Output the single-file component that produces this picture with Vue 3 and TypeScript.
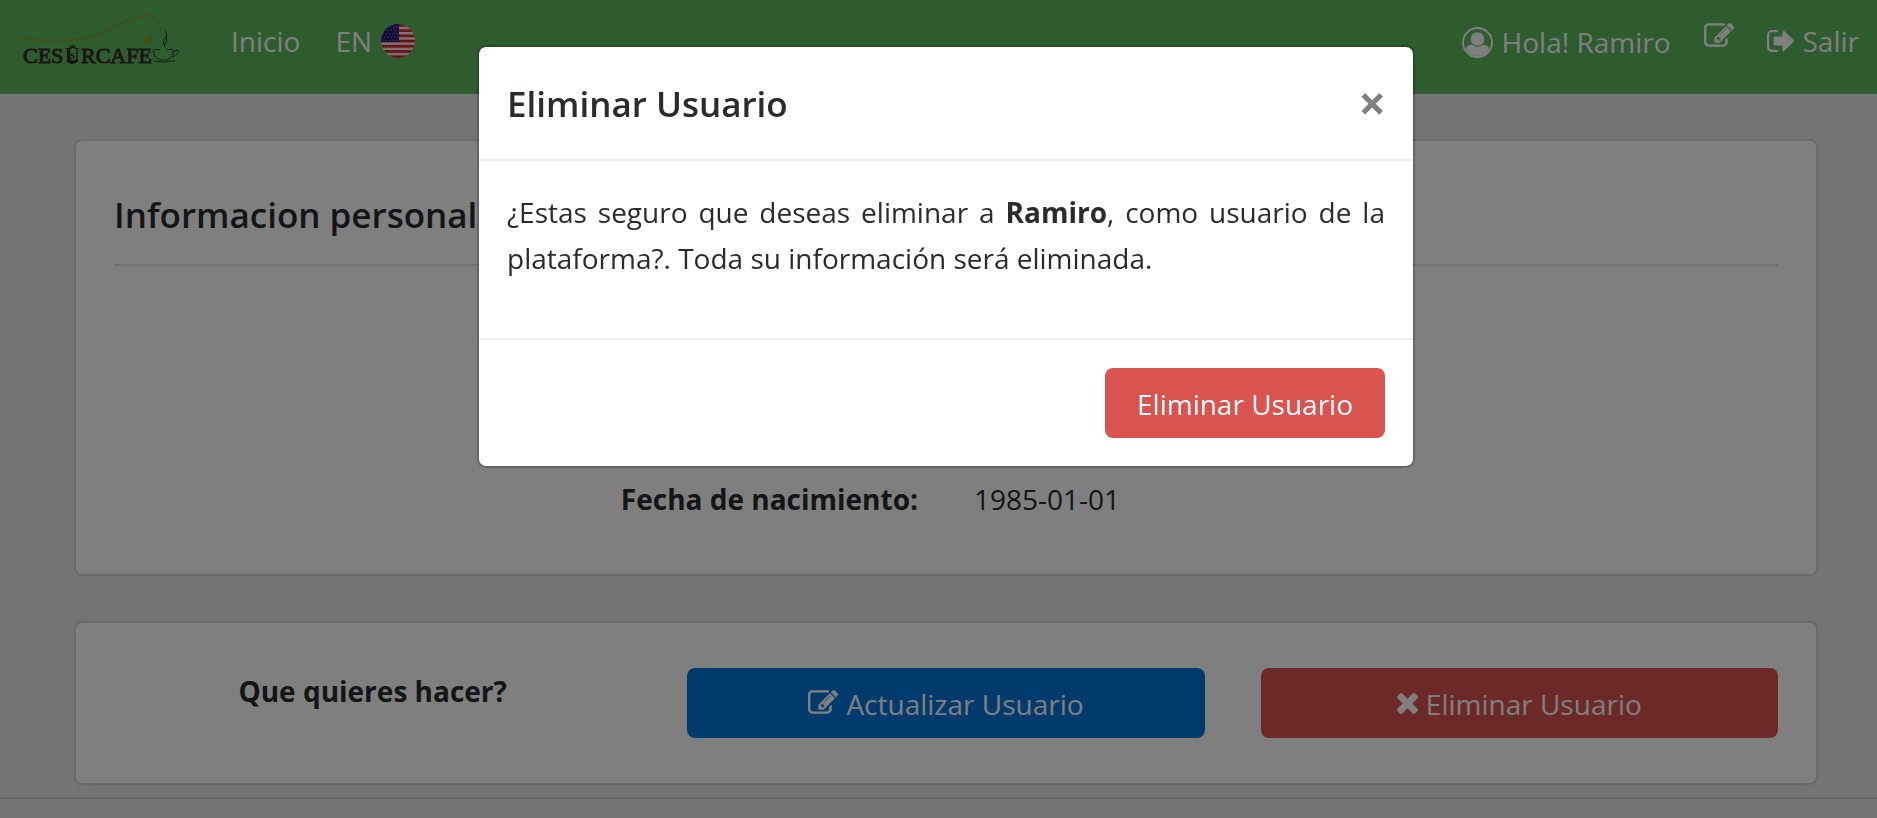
<script setup lang="ts">
import { ref } from 'vue'

const user = { name: 'Ramiro', birthDate: '1985-01-01' }
const dialogOpen = ref(true)

const icons = {
  edit: 'M888 1184l116-116-152-152-116 116v56h96v96h56zm440-720q-16-16-33 1l-350 350q-17 17-1 33t33-1l350-350q17-17 1-33zm80 594v190q0 119-84.5 203.5t-203.5 84.5h-832q-119 0-203.5-84.5t-84.5-203.5v-832q0-119 84.5-203.5t203.5-84.5h832q63 0 117 25 15 7 18 23 3 17-9 29l-49 49q-14 14-32 8-23-6-45-6h-832q-66 0-113 47t-47 113v832q0 66 47 113t113 47h832q66 0 113-47t47-113v-126q0-13 9-22l64-64q15-15 35-7t20 29zm-96-738l288 288-672 672h-288v-288zm444 132l-92 92-288-288 92-92q28-28 68-28t68 28l152 152q28 28 28 68t-28 68z',
  signOut: 'M704 1440q0 4 1 20t.5 26.5-3 23.5-10 19.5-20.5 6.5h-320q-119 0-203.5-84.5t-84.5-203.5v-704q0-119 84.5-203.5t203.5-84.5h320q13 0 22.5 9.5t9.5 22.5q0 4 1 20t.5 26.5-3 23.5-10 19.5-20.5 6.5h-320q-66 0-113 47t-47 113v704q0 66 47 113t113 47h312l11.5 1 11.5 3 8 5.5 7 9 2 13.5zm928-544q0 26-19 45l-544 544q-19 19-45 19t-45-19-19-45v-288h-448q-26 0-45-19t-19-45v-384q0-26 19-45t45-19h448v-288q0-26 19-45t45-19 45 19l544 544q19 19 19 45z',
  times: 'M1490 1322q0 40-28 68l-136 136q-28 28-68 28t-68-28l-294-294-294 294q-28 28-68 28t-68-28l-136-136q-28-28-28-68t28-68l294-294-294-294q-28-28-28-68t28-68l136-136q28-28 68-28t68 28l294 294 294-294q28-28 68-28t68 28l136 136q28 28 28 68t-28 68l-294 294 294 294q28 28 28 68z',
}
</script>

<template>
  <div class="page">
    <header class="navbar">
      <a class="brand" href="#" aria-label="Cesurcafe">
        <svg width="164" height="62" viewBox="18 10 164 62">
          <path d="M20 38.5C45 41 70 42 90 37C110 32 128 17 145 15.3C155 15 161 25 162 36" fill="none" stroke="#8a9a2c" stroke-width="1.5" />
          <path d="M144 45C143 39 147 37 152 35C152 41 151 44 146 43.500z" fill="#8a9a2c" />
          <g class="brand-text">
            <text x="23" y="63">CES</text>
            <text x="81" y="63">RCAFE</text>
          </g>
          <text class="brand-shield" x="65" y="62">U</text>
          <path d="M69 48L70 46L72.500 45L75 46L76 48z" fill="#2c4a20" />
          <path d="M67 60Q72 66 78 60" fill="none" stroke="#2b1f1c" stroke-width="2" />
          <text class="brand-mark" x="70" y="59">S</text>
          <g fill="none" stroke="#2b3a24" stroke-width="1">
            <path d="M153.500 50Q153 58 160 60H167Q174 57 173.500 50M154 49.500H160M167 49.500H173M173 52Q176 49 178.500 51Q179 53 173 57" />
            <path d="M154 61Q164 63.500 175 60.500" />
            <path d="M165 31Q168 35 164.500 39Q162 43 165 47M166.500 36Q168 42 164 46" />
          </g>
        </svg>
      </a>
      <nav class="nav-left">
        <a href="#">Inicio</a>
        <a class="with-icon" href="#">EN
          <svg width="34" height="34" viewBox="0 0 34 34" aria-hidden="true">
            <defs><clipPath id="flag-round"><circle cx="17" cy="17" r="17" /></clipPath></defs>
            <g clip-path="url(#flag-round)">
              <rect width="34" height="34" fill="#f0e4e6" />
              <rect v-for="n in 7" :key="n" y="0" width="34" height="2.700" :transform="`translate(0 ${(n - 1) * 5.230})`" fill="#d3222e" />
              <rect width="18" height="18" fill="#2b1a78" />
              <g fill="#8d83b8">
                <template v-for="r in 5" :key="r">
                  <circle v-for="c in 5" :key="c" :cx="c * 3.500 - (r % 2) * 1.500" :cy="r * 3.400 - 0.500" r="0.600" />
                </template>
              </g>
            </g>
          </svg>
        </a>
      </nav>
      <nav class="nav-right">
        <a class="with-icon greeting" href="#">
          <svg width="31" height="31" viewBox="0 0 31 31" aria-hidden="true">
            <defs><clipPath id="avatar-round"><circle cx="15.500" cy="15.500" r="13.500" /></clipPath></defs>
            <circle cx="15.500" cy="15.500" r="14.500" fill="none" stroke="currentColor" stroke-width="1.800" />
            <g clip-path="url(#avatar-round)">
              <path d="M3 31V24Q4 17.500 10 17.500Q15.500 22 21 17.500Q27 17.500 28 24V31z" fill="currentColor" />
            </g>
            <circle cx="15.500" cy="12" r="6.800" fill="currentColor" />
          </svg>
          Hola! {{ user.name }}
        </a>
        <a class="edit-link" href="#" aria-label="Editar">
          <svg width="30" height="24" viewBox="0 128 1792 1408" fill="currentColor"><path :d="icons.edit" stroke="currentColor" stroke-width="30" /></svg>
        </a>
        <a class="with-icon" href="#">
          <svg width="27" height="22" viewBox="64 256 1568 1280" fill="currentColor" aria-hidden="true"><path :d="icons.signOut" /></svg>
          Salir
        </a>
      </nav>
    </header>

    <main class="content">
      <section class="card info">
        <h1>Informacion personal</h1>
        <dl>
          <dt>Fecha de nacimiento:</dt>
          <dd>{{ user.birthDate }}</dd>
        </dl>
      </section>
      <section class="card actions">
        <strong>Que quieres hacer?</strong>
        <button class="btn primary" type="button">
          <svg class="raised" width="30" height="24" viewBox="0 128 1792 1408" fill="currentColor" aria-hidden="true"><path :d="icons.edit" stroke="currentColor" stroke-width="30" /></svg>
          Actualizar Usuario
        </button>
        <button class="btn danger" type="button" @click="dialogOpen = true">
          <svg width="21" height="21" viewBox="300 364 1192 1192" fill="currentColor" aria-hidden="true"><path :d="icons.times" /></svg>
          Eliminar Usuario
        </button>
      </section>
    </main>
    <hr class="footer-line">

    <div v-if="dialogOpen" class="overlay">
      <div class="dialog" role="dialog" aria-modal="true" aria-labelledby="dialog-title">
        <div class="dialog-header">
          <h2 id="dialog-title">Eliminar Usuario</h2>
          <button class="close" type="button" aria-label="Cerrar" @click="dialogOpen = false">×</button>
        </div>
        <div class="dialog-body">
          <p>¿Estas seguro que deseas eliminar a <b>{{ user.name }}</b>, como usuario de la plataforma?. Toda su información será eliminada.</p>
        </div>
        <div class="dialog-footer">
          <button class="btn danger" type="button">Eliminar Usuario</button>
        </div>
      </div>
    </div>
  </div>
</template>

<style>
body {
  margin: 0;
  background: #eaeaea;
}
</style>

<style scoped>
* {
  box-sizing: border-box;
}
.page {
  min-height: 100vh;
  overflow: hidden;
  font: 28px/46px "Segoe UI", "Open Sans", "Noto Sans", sans-serif;
  color: #292b2c;
}
.navbar {
  display: flex;
  height: 94px;
  padding: 10px 18px;
  background: #5cb85c;
}
.brand {
  margin-right: 49px;
}
.brand svg {
  display: block;
}
.brand-text {
  font: 22px "Liberation Serif", serif;
  fill: #382c28;
  stroke: #382c28;
  stroke-width: 0.9px;
}
.brand-shield {
  font: bold 20px "Liberation Serif", serif;
  fill: #382c28;
}
.brand-mark {
  font: bold 9px "Liberation Serif", serif;
  fill: #2b1f1c;
}
.nav-left,
.nav-right {
  display: flex;
  align-items: flex-start;
  padding-top: 8px;
}
.nav-left {
  gap: 35px;
}
.nav-right {
  gap: 33px;
  margin-left: auto;
}
.navbar a {
  color: #fff;
  text-decoration: none;
  white-space: nowrap;
}
.with-icon {
  display: flex;
  align-items: center;
  gap: 9px;
}
.greeting {
  padding-top: 1px;
}
.edit-link {
  display: flex;
  padding-top: 5px;
}
.content {
  display: flex;
  flex-direction: column;
  gap: 45px;
  padding: 45px 59px 12px 74px;
}
.card {
  background: #fff;
  background-clip: padding-box;
  border: 2px solid rgba(0, 0, 0, 0.08);
  border-radius: 8px;
  box-shadow: 0 0 20px rgba(0, 0, 0, 0.03);
}
.info {
  min-height: 437px;
  padding: 45px 38px;
  display: flex;
  flex-direction: column;
  justify-content: space-between;
}
h1,
h2 {
  margin: 0;
  font-size: 35px;
  font-weight: 600;
  line-height: 58px;
}
h1 {
  padding-bottom: 20px;
  border-bottom: 2px solid rgba(0, 0, 0, 0.1);
}
dl {
  display: grid;
  grid-template-columns: 1fr 1fr;
  gap: 56px;
  margin: 0 0 7px;
}
dt {
  font-weight: 700;
  text-align: right;
}
dd {
  margin: 0;
}
.actions {
  display: grid;
  grid-template-columns: repeat(3, 1fr);
  gap: 56px;
  padding: 45px 38px;
}
.actions strong {
  text-align: center;
}
.btn {
  display: flex;
  align-items: center;
  justify-content: center;
  gap: 8px;
  height: 70px;
  padding: 1px 32px 0;
  border: 0;
  border-radius: 8px;
  color: #fff;
  font: inherit;
  white-space: nowrap;
  cursor: pointer;
}
.raised {
  margin-bottom: 4px;
}
.primary {
  background: #0275d8;
}
.danger {
  background: #d9534f;
}
.footer-line {
  margin: 0;
  border: 0;
  border-top: 2px solid rgba(0, 0, 0, 0.1);
}
.overlay {
  position: fixed;
  inset: 0;
  padding: 45px 0 0 15px;
  background: rgba(0, 0, 0, 0.5);
}
.dialog {
  width: 100%;
  max-width: 938px;
  margin: 0 auto;
  background: #fff;
  background-clip: padding-box;
  border: 2px solid rgba(0, 0, 0, 0.2);
  border-radius: 9px;
}
.dialog-header {
  display: flex;
  justify-content: space-between;
  align-items: center;
  padding: 28px 27px 26px 28px;
  border-bottom: 2px solid #eceeef;
}
.close {
  padding: 0 0 4px;
  border: 0;
  background: none;
  color: #808080;
  font: bold 48px/45px "Open Sans", sans-serif;
  cursor: pointer;
}
.dialog-body {
  padding: 28px;
  text-align: justify;
}
.dialog-body p {
  margin: 0 0 29px;
}
.dialog-footer {
  display: flex;
  justify-content: flex-end;
  padding: 28px;
  border-top: 2px solid #eceeef;
}
</style>
